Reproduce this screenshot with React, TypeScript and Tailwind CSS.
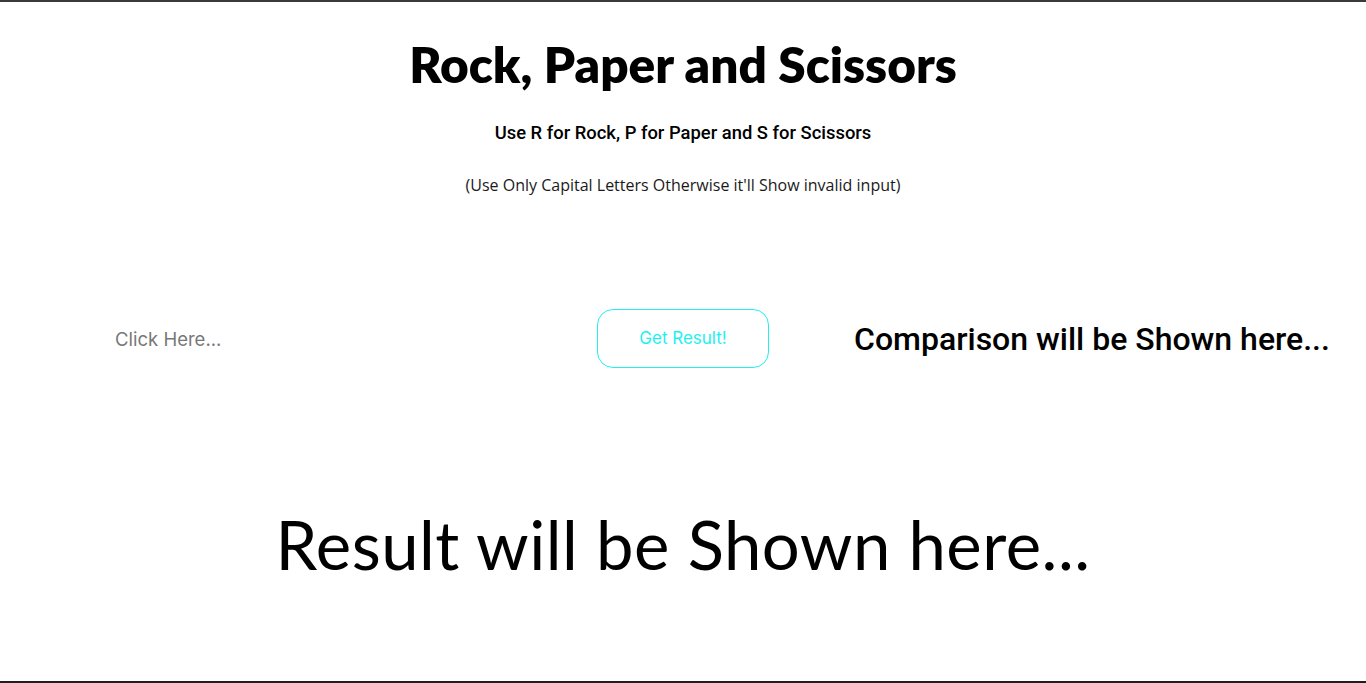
import React, { useState } from 'react';

const App: React.FC = () => {
    const [value, setValue] = useState('');

    return (
        <div className="w-full h-[683px] bg-white border-t-2 border-t-[#3a3a3a] border-b-2 border-b-[#1e1e1e] flex flex-col items-center overflow-hidden">
            {/* header */}
            <h1 className="mt-[33px] text-[49.5px] leading-[58px] font-extrabold text-black font-['Lato','Noto_Sans',sans-serif]">
                Rock, Paper and Scissors
            </h1>
            <p className="mt-[29px] text-[18.4px] leading-[22px] font-medium text-black font-['Roboto',sans-serif]">
                Use R for Rock, P for Paper and S for Scissors
            </p>
            <p className="mt-[30px] text-[16px] leading-[22px] text-[#1a1a1a] font-['Open_Sans',sans-serif]">
                (Use Only Capital Letters Otherwise it'll Show invalid input)
            </p>

            {/* input row */}
            <div className="mt-[113px] w-full flex items-center">
                <input
                    value={value}
                    onChange={(e) => setValue(e.target.value)}
                    placeholder="Click Here..."
                    className="ml-[115px] w-[440px] h-[40px] text-[18.5px] text-black placeholder:text-[#777] outline-none font-['Inter','Roboto',sans-serif]"
                />
                <button className="ml-[42px] w-[172px] h-[59px] rounded-[16px] border border-[#22f0f0] text-[#1ef0f0] text-[17px] font-['Inter','Roboto',sans-serif]">
                    Get Result!
                </button>
                <h2 className="ml-[85px] text-[32px] leading-[36px] font-medium text-black font-['Roboto',sans-serif]">
                    Comparison will be Shown here...
                </h2>
            </div>

            {/* result */}
            <h1 className="mt-[138px] text-[67px] leading-[76px] font-normal text-black tracking-[0.5px] font-['Lato','Noto_Sans',sans-serif]">
                Result will be Shown here...
            </h1>
        </div>
    );
};

export default App;
